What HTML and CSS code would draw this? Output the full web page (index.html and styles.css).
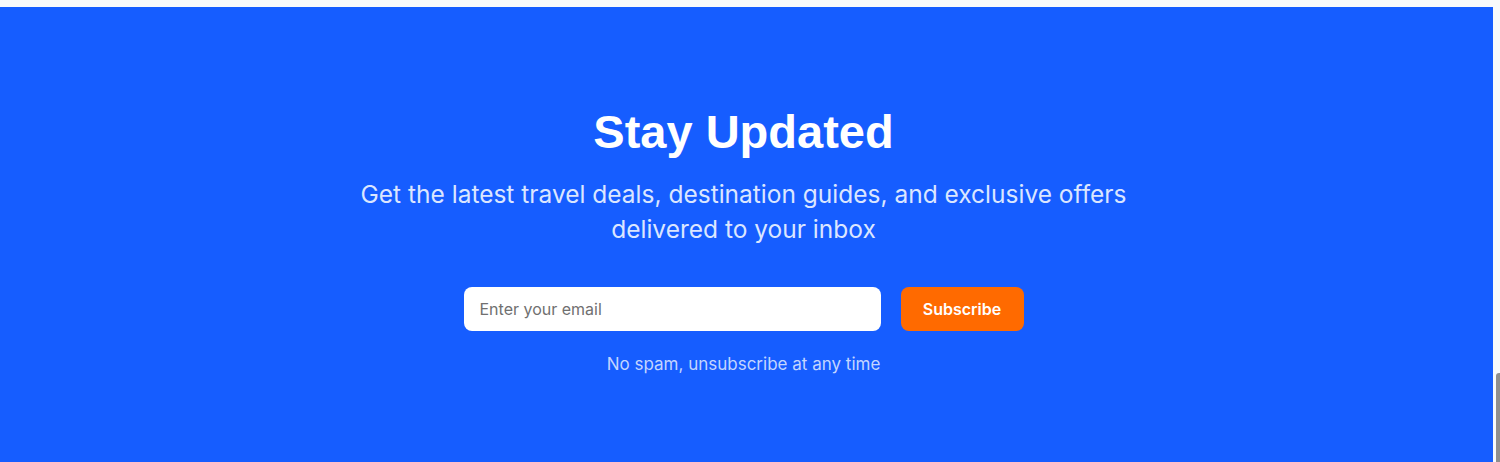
FILE: index.html
```html
<!DOCTYPE html>
<html lang="en">
<head>
<meta charset="utf-8">
<title>Stay Updated</title>
<link rel="stylesheet" href="styles.css">
</head>
<body>
<div class="page">
  <section class="newsletter">
    <div class="newsletter-inner">
      <h2 class="title">Stay Updated</h2>
      <p class="subtitle">Get the latest travel deals, destination guides, and exclusive offers delivered to your inbox</p>
      <form class="signup">
        <input class="email" type="email" placeholder="Enter your email">
        <button class="subscribe" type="button">Subscribe</button>
      </form>
      <p class="note">No spam, unsubscribe at any time</p>
    </div>
  </section>
</div>
<div class="scroll-thumb"></div>
</body>
</html>
```
FILE: styles.css
```css
html, body {
  margin: 0;
  padding: 0;
  height: 100%;
  overflow: hidden;
}
body {
  background: #f9fafb;
  font-family: Inter, "Liberation Sans", Arial, sans-serif;
}
.page {
  padding: 7px 7px 0 0;
}
.newsletter {
  background: #165dff;
  height: 455px;
  box-sizing: border-box;
  padding: 97px 6px 0 0;
}
.newsletter-inner {
  display: flex;
  flex-direction: column;
  align-items: center;
  text-align: center;
}
.title {
  margin: 0;
  color: #ffffff;
  font-family: "Liberation Sans", Arial, sans-serif;
  font-size: 47px;
  font-weight: 700;
  line-height: 56px;
}
.subtitle {
  margin: 17px 0 0;
  width: 820px;
  color: #dbe6ff;
  font-size: 24.5px;
  line-height: 35px;
}
.signup {
  display: flex;
  gap: 20px;
  margin-top: 40px;
}
.email {
  width: 417px;
  height: 44px;
  box-sizing: border-box;
  border: none;
  border-radius: 8px;
  padding: 0 16px;
  font-family: inherit;
  font-size: 16px;
  color: #333;
  background: #fff;
  outline: none;
}
.email::placeholder {
  color: #707070;
}
.subscribe {
  width: 123px;
  height: 44px;
  border: none;
  border-radius: 8px;
  background: #ff6a00;
  color: #fff;
  font-family: inherit;
  font-size: 16px;
  font-weight: 600;
}
.note {
  margin: 22px 0 0;
  color: #c3d5ff;
  font-size: 17px;
  line-height: 22px;
}
.scroll-thumb {
  position: absolute;
  right: 0;
  top: 373px;
  width: 4px;
  height: 95px;
  background: #8f8f8f;
  border-radius: 3px 0 0 3px;
}
```
